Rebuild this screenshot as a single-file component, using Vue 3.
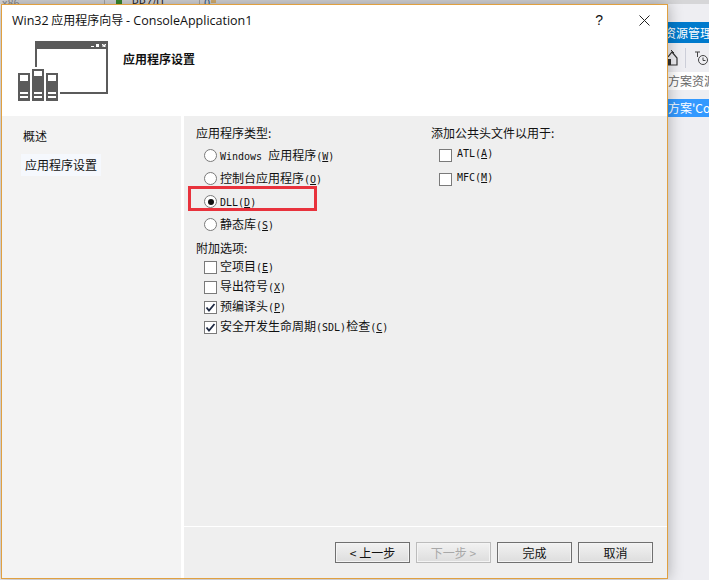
<template>
  <div class="desktop">
    <div class="top-strip">
      <span class="strip-text">x86</span>
      <i class="strip-sep"></i>
      <span class="play"></span>
      <span class="strip-text dark">PP7/U...</span>
      <i class="strip-sep second"></i>
      <span class="strip-text blue">0</span>
      <span class="strip-box"></span>
    </div>

    <aside class="explorer">
      <div class="ex-title"><span>资源管理</span></div>
      <div class="ex-tools">
        <svg width="10" height="16" viewBox="0 0 10 16"><path d="M0 7 4 2l5 6v7H0" fill="none" stroke="#333" stroke-width="1.2" /><rect x="0" y="9" width="3" height="6" fill="#333" /><path d="M3 0l3 3" stroke="#333" /></svg>
        <i class="ex-sep"></i>
        <svg width="16" height="16" viewBox="0 0 16 16"><circle cx="10" cy="10" r="4.5" fill="none" stroke="#444" /><path d="M10 7.5V10.5h2.5M2 2h5M4.5 2v5" fill="none" stroke="#444" /></svg>
      </div>
      <div class="ex-search">方案资源</div>
      <div class="ex-selected">方案'Co</div>
    </aside>

    <div class="dialog">
      <header class="titlebar">
        <span class="title"><span class="latin">Win32</span> 应用程序向导 <span class="latin">- ConsoleApplication1</span></span>
        <span class="help">?</span>
        <svg class="close" width="11" height="11" viewBox="0 0 11 11"><path d="M.5.5l10 10M10.5.5l-10 10" stroke="#222" stroke-width="1" fill="none" /></svg>
      </header>

      <div class="banner">
        <svg class="banner-icon" width="90" height="60" viewBox="0 0 90 60">
          <path d="M17 0h73v53H42v-2h46V8H19v18h-2z" fill="#5b5b5b" />
          <g fill="#fff"><rect x="73" y="5" width="3" height="1" /><rect x="78" y="3" width="3" height="3" /><path d="M84 3h1l1 1 1-1h1v1l-1 1 1 1h-2l-.5-.5L85 6h-1l1-1-1-1z" /></g>
          <g v-for="s in servers" :key="s.x">
            <rect :x="s.x" :y="s.y" width="12" :height="60 - s.y" fill="#5b5b5b" />
            <rect :x="s.x + 2" :y="s.y + 2" width="8" :height="s.pane" fill="#fff" />
            <rect :x="s.x + 2" y="51" width="8" height="2" fill="#fff" />
            <rect :x="s.x + 2" y="55" width="8" height="2" fill="#fff" />
          </g>
        </svg>
        <h1 class="banner-title">应用程序设置</h1>
      </div>

      <div class="body">
        <nav class="steps">
          <div class="step">概述</div>
          <div class="step current">应用程序设置</div>
        </nav>

        <div class="main">
          <div class="settings">
            <div class="col-left">
              <div class="group-label">应用程序类型:</div>
              <div v-for="r in appTypes" :key="r.key" class="radio-row" :class="{ marked: r.on }">
                <span class="radio" :class="{ on: r.on }"></span>
                <span class="opt">
                  <span v-for="(p, i) in parts(r.text)" :key="i" :class="{ latin: p.latin }">{{ p.text }}</span><span class="latin">(<u>{{ r.key }}</u>)</span>
                </span>
              </div>
              <div class="group-label extra">附加选项:</div>
              <div v-for="c in extras" :key="c.key" class="check-row">
                <span class="check">
                  <svg v-if="c.on" width="11" height="11" viewBox="0 0 11 11"><path d="M1.5 5.5 4 8.5 9.5 2" fill="none" stroke="#1f2a44" stroke-width="1.8" /></svg>
                </span>
                <span class="opt">
                  <span v-for="(p, i) in parts(c.text)" :key="i" :class="{ latin: p.latin }">{{ p.text }}</span><span class="latin">(<u>{{ c.key }}</u>)</span>
                </span>
              </div>
            </div>
            <div class="col-right">
              <div class="group-label head">添加公共头文件以用于:</div>
              <div v-for="c in headers" :key="c.key" class="header-row">
                <span class="check"></span>
                <span class="opt latin">{{ c.text }}(<u>{{ c.key }}</u>)</span>
              </div>
            </div>
          </div>

          <footer class="buttons">
            <button class="btn">&lt; 上一步</button>
            <button class="btn off" disabled>下一步 &gt;</button>
            <button class="btn">完成</button>
            <button class="btn">取消</button>
          </footer>
        </div>
      </div>
    </div>
  </div>
</template>

<script setup>
const servers = [
  { x: 0, y: 32, pane: 6 },
  { x: 14, y: 28, pane: 5 },
  { x: 28, y: 32, pane: 6 }
]

const appTypes = [
  { text: 'Windows 应用程序', key: 'W' },
  { text: '控制台应用程序', key: 'O' },
  { text: 'DLL', key: 'D', on: true },
  { text: '静态库', key: 'S' }
]

const extras = [
  { text: '空项目', key: 'E' },
  { text: '导出符号', key: 'X' },
  { text: '预编译头', key: 'P', on: true },
  { text: '安全开发生命周期(SDL)检查', key: 'C', on: true }
]

const headers = [
  { text: 'ATL', key: 'A' },
  { text: 'MFC', key: 'M' }
]

// latin runs are half the width of the CJK ones in the old bitmap font
const parts = (text) =>
  text.match(/[\x00-\x7f]+|[^\x00-\x7f]+/g).map((t) => ({ text: t, latin: /^[\x00-\x7f]/.test(t) }))
</script>

<style>
html, body {
  margin: 0;
  background: #eeeef2;
}
</style>

<style scoped>
.desktop {
  position: relative;
  width: 709px;
  height: 580px;
  overflow: hidden;
  background: #eeeef2;
  font-family: "Noto Sans CJK SC", sans-serif;
  font-size: 12px;
  color: #111;
}
.latin {
  font-family: "DejaVu Sans Mono", monospace;
  font-size: 10px;
}
.top-strip {
  display: flex;
  height: 4px;
  overflow: hidden;
  background: #d6d6d8;
}
.strip-text {
  font-size: 11px;
  line-height: 4px;
  color: #888;
  margin-left: 2px;
}
.strip-text.dark {
  margin-left: 10px;
  color: #222;
}
.strip-text.blue {
  margin-left: 4px;
  color: #2a5a8a;
}
.strip-sep {
  width: 1px;
  margin-left: 84px;
  background: #a8a8a8;
}
.strip-sep.second {
  margin-left: 26px;
}
.strip-box {
  width: 5px;
  height: 3px;
  margin-left: 1px;
  background: #d8b070;
}
.play {
  width: 6px;
  height: 4px;
  margin-left: 11px;
  background: #3a8a2e;
}
.explorer {
  position: absolute;
  left: 668px;
  top: 22px;
  width: 41px;
  overflow: hidden;
}
.ex-title {
  height: 21px;
  line-height: 21px;
  background: #007acc;
  color: #fff;
  white-space: nowrap;
}
.ex-title span {
  margin-left: -4px;
}
.ex-tools {
  display: flex;
  align-items: center;
  gap: 7px;
  height: 29px;
  background: #eeeef2;
}
.ex-sep {
  width: 1px;
  height: 20px;
  background: #ccced8;
}
.ex-search {
  height: 18px;
  line-height: 18px;
  background: #fff;
  color: #666;
  white-space: nowrap;
}
.ex-selected {
  margin-top: 9px;
  height: 18px;
  line-height: 18px;
  background: #3399ff;
  color: #fff;
  white-space: nowrap;
}
.dialog {
  position: absolute;
  left: 1px;
  top: 4px;
  width: 667px;
  height: 575px;
  display: flex;
  flex-direction: column;
  background: #fff;
  border: 1px solid #e0a040;
  box-sizing: border-box;
  box-shadow: 0 0 14px rgba(0, 0, 0, .3);
}
.titlebar {
  display: flex;
  align-items: center;
  height: 30px;
  padding: 0 17px 0 10px;
  flex: none;
}
.title {
  flex: 1;
  font-size: 12px;
  color: #111;
}
.title .latin {
  font-family: "Open Sans", sans-serif;
  font-size: 12.5px;
}
.help {
  font-family: "Liberation Sans", sans-serif;
  font-size: 14px;
  margin-right: 36px;
}
.banner {
  display: flex;
  align-items: flex-start;
  height: 81px;
  flex: none;
  padding-left: 16px;
}
.banner-icon {
  flex: none;
  margin-top: 6px;
}
.banner-title {
  margin: 16px 0 0 15px;
  font-size: 12px;
  font-weight: 700;
  line-height: 16px;
}
.body {
  flex: 1;
  display: flex;
  min-height: 0;
}
.steps {
  width: 179px;
  flex: none;
  background: #f3f3f3;
  padding-top: 10px;
}
.step {
  height: 20px;
  line-height: 20px;
  padding-left: 21px;
}
.step.current {
  margin: 8px 0 0 19px;
  width: 80px;
  height: 22px;
  line-height: 22px;
  padding-left: 4px;
  box-sizing: border-box;
  background: #f5f8fd;
}
.main {
  flex: 1;
  margin-left: 2px;
  display: flex;
  flex-direction: column;
  background: #efefef;
  border-left: 1px solid #fff;
}
.settings {
  flex: 1;
  display: flex;
  padding: 10px 0 0 12px;
}
.col-left {
  width: 235px;
}
.group-label {
  height: 18px;
  line-height: 14px;
}
.group-label.extra {
  height: 17px;
  line-height: 16px;
  margin-top: 4px;
}
.group-label.head {
  height: 17px;
}
.radio-row {
  display: flex;
  align-items: center;
  gap: 3px;
  height: 23px;
  padding-left: 8px;
}
.radio-row.marked {
  position: relative;
}
.radio-row.marked::after {
  content: "";
  position: absolute;
  left: -8px;
  top: -4px;
  width: 123px;
  height: 19px;
  border: 3px solid #e8323c;
  pointer-events: none;
}
.radio {
  width: 11px;
  height: 11px;
  border: 1px solid #7a7a7a;
  border-radius: 50%;
  background: #fff;
  position: relative;
}
.radio.on::after {
  content: "";
  position: absolute;
  left: 2.5px;
  top: 2.5px;
  width: 6px;
  height: 6px;
  border-radius: 50%;
  background: #111;
}
.check-row {
  display: flex;
  align-items: center;
  gap: 3px;
  height: 20px;
  padding-left: 8px;
}
.header-row {
  display: flex;
  align-items: center;
  gap: 5px;
  height: 24px;
  padding-left: 8px;
}
.check {
  width: 11px;
  height: 11px;
  border: 1px solid #7a7a7a;
  background: #fff;
  display: flex;
  align-items: center;
  justify-content: center;
}
.opt {
  white-space: nowrap;
  margin-top: -3px;
}
.buttons {
  display: flex;
  justify-content: flex-end;
  gap: 6px;
  height: 52px;
  flex: none;
  padding: 15px 14px 0 0;
  box-sizing: border-box;
  border-top: 1px solid #fff;
}
.btn {
  width: 75px;
  height: 21px;
  padding: 0;
  border: 1px solid #707070;
  box-shadow: inset 0 0 0 1px #f4f4f4;
  background: linear-gradient(#f2f2f2, #dddddd);
  font-family: "Noto Sans CJK SC", sans-serif;
  font-size: 12px;
  color: #111;
}
.btn.off {
  border-color: #bcbcbc;
  color: #a8a8a8;
}
</style>
